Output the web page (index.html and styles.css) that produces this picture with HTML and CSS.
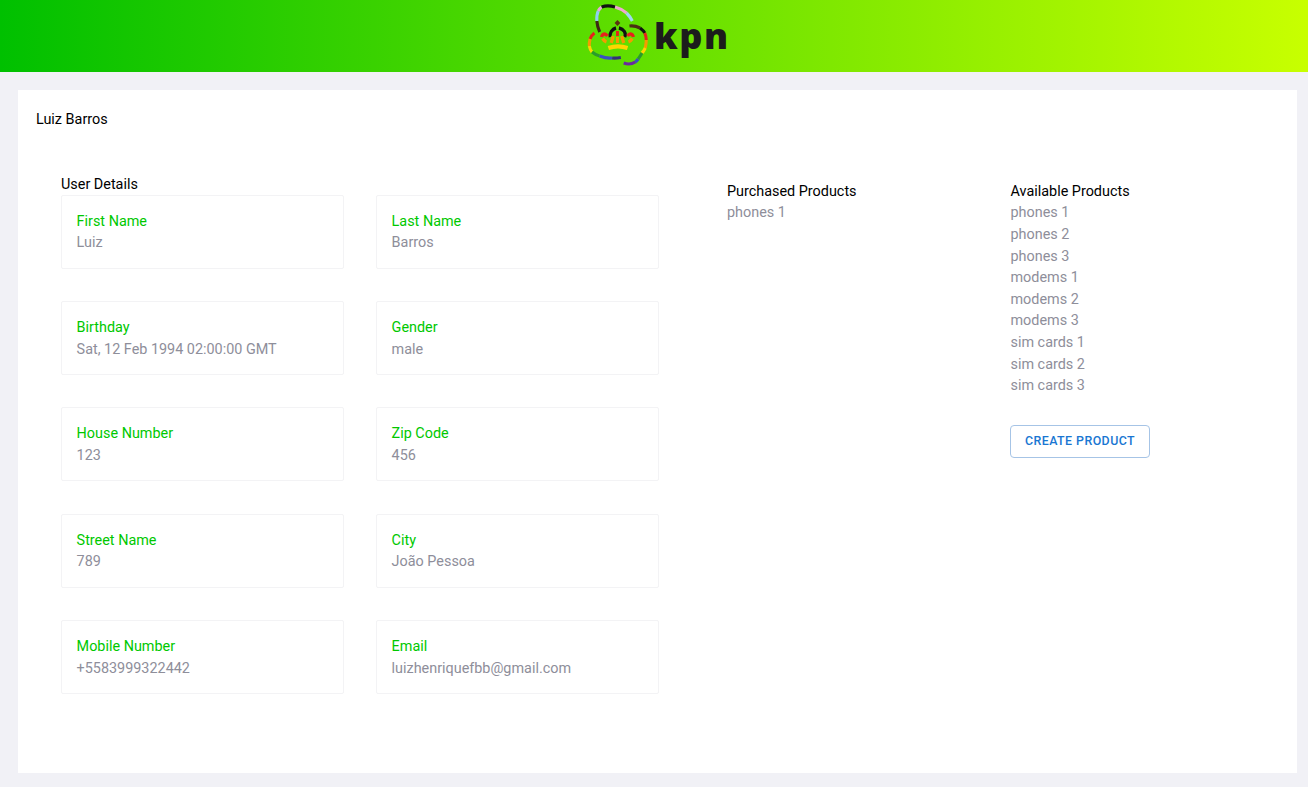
FILE: index.html
```html
<!DOCTYPE html>
<html>
<head>
<meta charset="utf-8"/>
<title>User details</title>
<link rel="stylesheet" href="styles.css">
</head>
<body>

<header class="topbar">
	<div class="logo">
		<svg class="crown" width="70" height="72" viewBox="0 0 70 72" fill="none" stroke-width="3.2">
			<g transform="translate(1.3 0) scale(.96 1)">
				<!-- outer ribbon -->
				<path d="M15 32C13.500 29 12.500 26 12 21" stroke="#3d2a14"/>
				<path d="M12 21C11.800 17 12 14 13.500 11" stroke="#8fd0ee"/>
				<path d="M13.500 11C14.500 9 15.500 8 17 7" stroke="#e8a8d8"/>
				<path d="M17 7C21 5.500 26 5.500 31 7" stroke="#111"/>
				<path d="M31 7C35 8 39 10 43 13" stroke="#f0a8d0"/>
				<path d="M43 13C45.500 15.500 47.500 18 49 21" stroke="#9fd8f0"/>
				<path d="M46 26C50 25.500 54 26.500 57 28" stroke="#4a2f14"/>
				<path d="M57 28C59 29.500 61 31 62 33" stroke="#111"/>
				<path d="M62 33C63 35.500 63.500 38 63.500 40" stroke="#e8201c"/>
				<path d="M63.500 40C63.500 43 63 45.500 62.500 48" stroke="#f59a00"/>
				<path d="M62.500 48C61.500 50 60.500 51.500 59 53" stroke="#ffd500"/>
				<path d="M59 53C58 55 56.500 57 55 59" stroke="#2c9a2c"/>
				<path d="M55 59C54 60.500 53 61.500 52 62" stroke="#3a4fc0"/>
				<path d="M52 62C48 64.500 44 64.500 40 63" stroke="#6a2aa0"/>
				<path d="M9.500 33C7.500 34.500 6 36.500 5 39" stroke="#e8201c"/>
				<path d="M5 39C4.300 41.500 4 44 4.200 46" stroke="#f59a00"/>
				<path d="M4.200 46C4.700 48.500 5.500 50.500 7 52" stroke="#ffd500"/>
				<path d="M7 52C9.500 54 12 55.500 15 56" stroke="#2c9a2c"/>
				<path d="M15 56C19 57.500 24 58.500 28 58" stroke="#3a4fc0"/>
				<path d="M28 58C31 58.300 34 58 37 57.500" stroke="#35307a"/>
				<!-- crown -->
				<path d="M33.500 20l3 3-3 3-3-3z" fill="#5a3312" stroke="none"/>
				<path d="M26 37C25 33 28 29 32 28" stroke="#111" stroke-width="3.400"/>
				<path d="M35 28C40 29 43 33 41 37" stroke="#111" stroke-width="3.400"/>
				<path d="M17 37C17.500 34 20.500 32.500 23 36" stroke="#e8201c" stroke-width="3.400"/>
				<path d="M44 36C46.500 32.500 49.500 34 50 37" stroke="#e8201c" stroke-width="3.400"/>
				<path d="M18 38.500C19 40 20.500 41.500 22 42" stroke="#f59a00" stroke-width="3.400"/>
				<path d="M45 42C46.500 41.500 48 40 49 38.500" stroke="#f59a00" stroke-width="3.400"/>
				<path d="M29 36L27 43" stroke="#f59a00" stroke-width="3.400"/>
				<path d="M38 36L40 43" stroke="#f59a00" stroke-width="3.400"/>
				<path d="M33.500 31V36" stroke="#e8201c" stroke-width="3"/>
				<path d="M33.500 37V43" stroke="#f59a00" stroke-width="3"/>
				<path d="M24 48C30 46 38 46 44 48" stroke="#ffd500" stroke-width="4.200"/>
			</g>
		</svg>
		<span class="wordmark">kpn</span>
	</div>
</header>

<main class="panel">
	<div class="user-name">Luiz Barros</div>

	<div class="columns">
		<section class="details">
			<div class="section-title">User Details</div>
			<div class="field-grid">
				<div class="field"><div class="field-label">First Name</div><div class="muted">Luiz</div></div>
				<div class="field"><div class="field-label">Last Name</div><div class="muted">Barros</div></div>
				<div class="field"><div class="field-label">Birthday</div><div class="muted">Sat, 12 Feb 1994 02:00:00 GMT</div></div>
				<div class="field"><div class="field-label">Gender</div><div class="muted">male</div></div>
				<div class="field"><div class="field-label">House Number</div><div class="muted">123</div></div>
				<div class="field"><div class="field-label">Zip Code</div><div class="muted">456</div></div>
				<div class="field"><div class="field-label">Street Name</div><div class="muted">789</div></div>
				<div class="field"><div class="field-label">City</div><div class="muted">João Pessoa</div></div>
				<div class="field"><div class="field-label">Mobile Number</div><div class="muted">+5583999322442</div></div>
				<div class="field"><div class="field-label">Email</div><div class="muted">luizhenriquefbb@gmail.com</div></div>
			</div>
		</section>

		<section class="products purchased">
			<div class="product-title">Purchased Products</div>
			<div class="muted">phones 1</div>
		</section>

		<section class="products available">
			<div class="product-title">Available Products</div>
			<div class="muted">phones 1</div>
			<div class="muted">phones 2</div>
			<div class="muted">phones 3</div>
			<div class="muted">modems 1</div>
			<div class="muted">modems 2</div>
			<div class="muted">modems 3</div>
			<div class="muted">sim cards 1</div>
			<div class="muted">sim cards 2</div>
			<div class="muted">sim cards 3</div>
			<button class="create-btn">Create Product</button>
		</section>
	</div>
</main>

</body>
</html>
```

FILE: styles.css
```css
body {
	margin: 0;
	background: #f1f1f6;
	font-family: Roboto, sans-serif;
	font-size: 14.4px;
	line-height: 21.6px;
	color: #000;
}
/* header */
.topbar {
	height: 72px;
	display: flex;
	justify-content: center;
	background: linear-gradient(90deg, #00c000, #c8ff00);
}
.logo {
	display: flex;
	align-items: flex-start;
	width: 143px;
	margin-left: 3px;
}
.crown {
	flex: none;
}
.wordmark {
	font-family: "Open Sans", sans-serif;
	font-weight: 800;
	font-size: 36px;
	line-height: 72px;
	letter-spacing: 1.5px;
	color: #1c1c1c;
}
/* panel */
.panel {
	margin: 18px 11px 14px 18px;
	height: 683px;
	background: #fff;
	padding: 19px 18px 18px;
	box-sizing: border-box;
}
.user-name {
	height: 22px;
}
.columns {
	display: flex;
	margin-top: 43px;
	padding-left: 25px;
}
/* user details */
.details {
	flex: none;
	width: 598px;
}
.section-title {
	height: 20.95px;
}
.field-grid {
	display: grid;
	grid-template-columns: 283px 283px;
	column-gap: 32px;
	row-gap: 32.27px;
}
.field {
	height: 74px;
	box-sizing: border-box;
	border: 1px solid #f3f3f5;
	border-radius: 2px;
	padding: 14.94px 15px 15px 14.6px;
}
.field-label {
	color: #00c800;
}
.muted {
	color: #8e8e9a;
}
/* products */
.products {
	padding-top: 6.8px;
}
.purchased {
	flex: none;
	width: 283.5px;
	margin-left: 68px;
}
.available {
	flex: 1;
}
.create-btn {
	display: block;
	margin: 28px 0 0 -0.5px;
	height: 33px;
	width: 140px;
	padding: 0 0 1px;
	background: #fff;
	border: 1px solid #a6c4e6;
	border-radius: 4px;
	color: #1976d2;
	font-family: Roboto, sans-serif;
	font-size: 12.4px;
	font-weight: 500;
	letter-spacing: 0.45px;
	text-transform: uppercase;
}
```
